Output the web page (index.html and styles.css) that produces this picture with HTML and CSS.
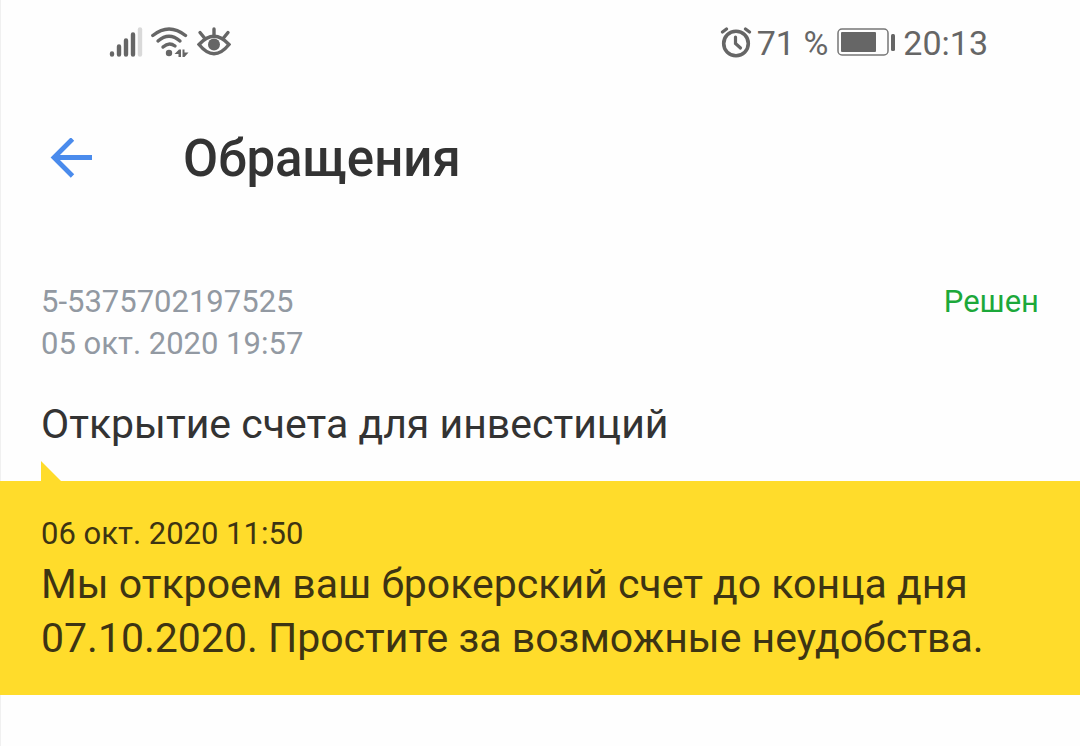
FILE: index.html
```
<!DOCTYPE html>
<html lang="ru">
<head>
    <meta charset="UTF-8">
    <meta name="viewport" content="width=device-width, initial-scale=1">
    <title>Обращения</title>
    <link rel="stylesheet" href="styles.css">
</head>
<body>
    <div class="status-bar">
        <div class="status-left">
            <svg class="icon-signal" width="34" height="32" viewBox="0 0 34 32">
                <g stroke="#666" stroke-width="4.400" stroke-linecap="round">
                    <path d="M3 26.500V27.500M10 19.500V27.500M17 13.500V27.500M24 7.500V27.500"/>
                    <path stroke="#d9d9d9" d="M31 2.500V27.500"/>
                </g>
            </svg>
            <svg class="icon-wifi" width="38" height="32" viewBox="0 0 38 32">
                <g fill="none" stroke="#666" stroke-width="3.400" stroke-linecap="round">
                    <path d="M1.800 8.500Q18-4.500 34.500 8.500"/>
                    <path d="M7 14Q18 4.500 29 14"/>
                    <path d="M12 20Q18 14.500 24 19"/>
                </g>
                <circle cx="18" cy="26" r="3.200" fill="#666"/>
                <path fill="#666" d="M23.500 27L28 22.500H30V30H27.500V27ZM31.500 22.500H33.500V25.500H37.500L33.500 30H31.500Z"/>
            </svg>
            <svg class="icon-eye" width="34" height="32" viewBox="0 0 34 32">
                <g fill="none" stroke="#666" stroke-width="3.400" stroke-linecap="round">
                    <path d="M2 17.500Q17 1 32 17.500Q17 36 2 17.500Z"/>
                    <path d="M17 2V8M3 5.500L7.500 11M31 5.500L26.500 11"/>
                </g>
                <circle cx="17" cy="17.500" r="6" fill="#666"/>
            </svg>
        </div>
        <div class="status-right">
            <svg class="icon-alarm" width="32" height="32" viewBox="0 0 32 32">
                <g fill="none" stroke="#666" stroke-linecap="round">
                    <circle cx="16" cy="16.500" r="12.300" stroke-width="3.600"/>
                    <path stroke-width="3.200" d="M2.500 5L6.500 2M29.500 5L25.500 2"/>
                    <path stroke-width="3.200" d="M15.500 10V16.500L20.500 21"/>
                </g>
            </svg>
            <span>71 %</span>
            <svg class="icon-battery" width="58" height="30" viewBox="0 0 58 30">
                <rect x="1" y="1" width="50" height="26" rx="4" fill="none" stroke="#777" stroke-width="1.500"/>
                <rect x="4" y="4" width="35" height="20" rx="1" fill="#666"/>
                <rect x="54" y="6" width="4" height="17" rx="1.500" fill="#666"/>
            </svg>
            <span>20:13</span>
        </div>
    </div>

    <header class="header">
        <button class="back" type="button" aria-label="Назад">
            <svg width="42" height="42" viewBox="0 0 42 42">
                <path d="M42 19.500H4M22.500 1L4 19.500L22.500 38" fill="none" stroke="#4a8bec" stroke-width="4.800"/>
            </svg>
        </button>
        <h1 class="title">Обращения</h1>
    </header>

    <main>
        <section class="request">
            <div class="request-info">
                <div class="meta">
                    <p>5-5375702197525</p>
                    <p>05 окт. 2020 19:57</p>
                </div>
                <span class="state">Решен</span>
            </div>
            <h2 class="subject">Открытие счета для инвестиций</h2>
        </section>

        <section class="answer">
            <p class="answer-date">06 окт. 2020 11:50</p>
            <p class="answer-text">Мы откроем ваш брокерский счет до конца дня 07.10.2020. Простите за возможные неудобства.</p>
        </section>
    </main>
</body>
</html>
```
FILE: styles.css
```
*{
    margin:0;
    padding:0;
    box-sizing:border-box;
}

body{
    min-height:100vh;
    background:#fefefe;
    color:#333;
    font-family:Roboto, "Liberation Sans", sans-serif;
    box-shadow:inset 1px 0 #f0f0f0;
}

svg{
    display:block;
}

.status-bar{
    display:flex;
    justify-content:space-between;
    align-items:center;
    height:86px;
    padding:0 92px 0 109px;
    color:#666;
    font-size:34px;
    line-height:40px;
}

.status-left{
    display:flex;
    gap:8px;
}

.status-right{
    display:flex;
    align-items:center;
}

.icon-alarm{
    margin-right:5px;
}

.icon-battery{
    margin:0 8px 0 9px;
}

.header{
    display:flex;
    align-items:center;
    gap:91px;
    height:146px;
    padding:0 50px;
}

.back{
    border:none;
    background:none;
    cursor:pointer;
}

.title{
    font-size:51px;
    font-weight:500;
    line-height:62px;
}

.request{
    padding:49px 41px 30px;
}

.request-info{
    display:flex;
    justify-content:space-between;
    font-size:31px;
    line-height:42px;
}

.meta{
    color:#9299a2;
}

.state{
    color:#1ca83a;
}

.subject{
    margin-top:32px;
    font-size:41px;
    font-weight:400;
    line-height:54px;
}

.answer{
    position:relative;
    padding:32px 41px 30px;
    background:#ffdc2b;
    color:#3d3413;
}

/* хвостик сообщения */
.answer::before{
    content:"";
    position:absolute;
    left:41px;
    bottom:100%;
    border-bottom:20px solid #ffdc2b;
    border-right:20px solid transparent;
}

.answer-date{
    font-size:31px;
    line-height:42px;
}

.answer-text{
    margin-top:2px;
    font-size:41px;
    line-height:54px;
}
```
